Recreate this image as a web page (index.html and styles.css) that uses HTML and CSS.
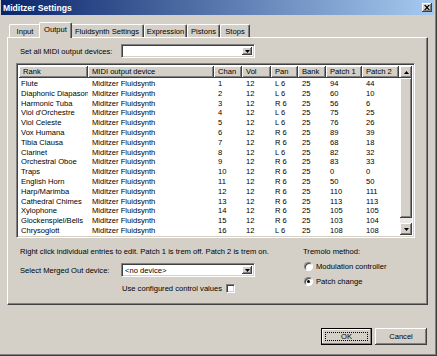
FILE: index.html
```html
<!DOCTYPE html>
<html>
<head>
<meta charset="utf-8">
<link rel="stylesheet" href="styles.css">
</head>
<body>
<div class="window">
  <div class="titlebar">
    <span class="title">Miditzer Settings</span>
    <span class="close"><svg width="6" height="5" viewBox="0 0 6 5"><path d="M0 0h1.5l1.5 1.5 1.5-1.5h1.5l-2.2 2.5 2.2 2.5h-1.5l-1.5-1.5-1.5 1.5h-1.5l2.2-2.5z" fill="#000"/></svg></span>
  </div>
  <div class="client">
    <div class="tabs">
      <div class="tab t-input">Input</div>
      <div class="tab t-output selected">Output</div>
      <div class="tab t-fluid">Fluidsynth Settings</div>
      <div class="tab t-expr">Expression</div>
      <div class="tab t-pist">Pistons</div>
      <div class="tab t-stops">Stops</div>
    </div>
    <div class="panel">
      <div class="setrow">
        <span class="lbl">Set all MIDI output devices:</span>
        <div class="combo"><span class="combo-text"></span><span class="dd"><svg width="5" height="3" viewBox="0 0 5 3"><path d="M0 0h5l-2.5 3z" fill="#000"/></svg></span></div>
      </div>
      <div class="listview">
        <div class="lv-main">
          <div class="lv-head">
            <div class="hc">Rank</div><div class="hc">MIDI output device</div><div class="hc">Chan</div><div class="hc">Vol</div><div class="hc">Pan</div><div class="hc">Bank</div><div class="hc">Patch 1</div><div class="hc">Patch 2</div><div class="hc filler"></div>
          </div>
          <div class="lv-body">
            <div class="row"><span class="c0">Flute</span><span>Miditzer Fluidsynth</span><span>1</span><span>12</span><span>L 6</span><span>25</span><span>94</span><span>44</span></div>
            <div class="row"><span class="c0">Diaphonic Diapason</span><span>Miditzer Fluidsynth</span><span>2</span><span>12</span><span>L 6</span><span>25</span><span>60</span><span>10</span></div>
            <div class="row"><span class="c0">Harmonic Tuba</span><span>Miditzer Fluidsynth</span><span>3</span><span>12</span><span>R 6</span><span>25</span><span>56</span><span>6</span></div>
            <div class="row"><span class="c0">Viol d'Orchestre</span><span>Miditzer Fluidsynth</span><span>4</span><span>12</span><span>L 6</span><span>25</span><span>75</span><span>25</span></div>
            <div class="row"><span class="c0">Viol Celeste</span><span>Miditzer Fluidsynth</span><span>5</span><span>12</span><span>L 6</span><span>25</span><span>76</span><span>26</span></div>
            <div class="row"><span class="c0">Vox Humana</span><span>Miditzer Fluidsynth</span><span>6</span><span>12</span><span>R 6</span><span>25</span><span>89</span><span>39</span></div>
            <div class="row"><span class="c0">Tibia Clausa</span><span>Miditzer Fluidsynth</span><span>7</span><span>12</span><span>R 6</span><span>25</span><span>68</span><span>18</span></div>
            <div class="row"><span class="c0">Clarinet</span><span>Miditzer Fluidsynth</span><span>8</span><span>12</span><span>L 6</span><span>25</span><span>82</span><span>32</span></div>
            <div class="row"><span class="c0">Orchestral Oboe</span><span>Miditzer Fluidsynth</span><span>9</span><span>12</span><span>R 6</span><span>25</span><span>83</span><span>33</span></div>
            <div class="row"><span class="c0">Traps</span><span>Miditzer Fluidsynth</span><span>10</span><span>12</span><span>R 6</span><span>25</span><span>0</span><span>0</span></div>
            <div class="row"><span class="c0">English Horn</span><span>Miditzer Fluidsynth</span><span>11</span><span>12</span><span>R 6</span><span>25</span><span>50</span><span>50</span></div>
            <div class="row"><span class="c0">Harp/Marimba</span><span>Miditzer Fluidsynth</span><span>12</span><span>12</span><span>R 6</span><span>25</span><span>110</span><span>111</span></div>
            <div class="row"><span class="c0">Cathedral Chimes</span><span>Miditzer Fluidsynth</span><span>13</span><span>12</span><span>R 6</span><span>25</span><span>113</span><span>113</span></div>
            <div class="row"><span class="c0">Xylophone</span><span>Miditzer Fluidsynth</span><span>14</span><span>12</span><span>R 6</span><span>25</span><span>105</span><span>105</span></div>
            <div class="row"><span class="c0">Glockenspiel/Bells</span><span>Miditzer Fluidsynth</span><span>15</span><span>12</span><span>R 6</span><span>25</span><span>103</span><span>104</span></div>
            <div class="row"><span class="c0">Chrysoglott</span><span>Miditzer Fluidsynth</span><span>16</span><span>12</span><span>L 6</span><span>25</span><span>108</span><span>108</span></div>
          </div>
        </div>
        <div class="scrollbar">
          <div class="sb-btn"><svg width="5" height="3" viewBox="0 0 5 3"><path d="M0 3h5l-2.5-3z" fill="#000"/></svg></div>
          <div class="sb-thumb"></div>
          <div class="sb-track"></div>
          <div class="sb-btn"><svg width="5" height="3" viewBox="0 0 5 3"><path d="M0 0h5l-2.5 3z" fill="#000"/></svg></div>
        </div>
      </div>
      <div class="lower">
        <div class="lower-left">
          <p class="hint">Right click individual entries to edit. Patch 1 is trem off. Patch 2 is trem on.</p>
          <div class="setrow merged">
            <span class="lbl">Select Merged Out device:</span>
            <div class="combo"><span class="combo-text">&lt;no device&gt;</span><span class="dd"><svg width="5" height="3" viewBox="0 0 5 3"><path d="M0 0h5l-2.5 3z" fill="#000"/></svg></span></div>
          </div>
          <div class="userow">
            <span>Use configured control values</span>
            <span class="check"></span>
          </div>
        </div>
        <div class="tremolo">
          <div class="trem-lbl">Tremolo method:</div>
          <div class="radio-row"><span class="radio"></span><span>Modulation controller</span></div>
          <div class="radio-row"><span class="radio on"><span class="dot"></span></span><span>Patch change</span></div>
        </div>
      </div>
    </div>
    <div class="buttons">
      <div class="btn default"><span class="focus">OK</span></div>
      <div class="btn">Cancel</div>
    </div>
  </div>
</div>
</body>
</html>
```

FILE: styles.css
```css
* { box-sizing: border-box; }
html, body { margin: 0; padding: 0; }
body {
  background: #d4d0c8;
  font-family: "Liberation Sans", Arial, sans-serif;
  font-size: 7.6px;
  color: #000;
}
.window {
  width: 437px;
  height: 356px;
  background: #d4d0c8;
  padding: 0 3px 3px 1px;
  box-shadow: inset -1px -1px #404040, inset -2px -2px #808080;
  display: flex;
  flex-direction: column;
  overflow: hidden;
}
.titlebar {
  height: 15px;
  flex: none;
  background: linear-gradient(to right, #0a246a, #a6caf0);
  display: flex;
  align-items: center;
  justify-content: space-between;
  padding: 0 2px 0 2px;
}
.title {
  color: #fff;
  font-weight: bold;
  font-size: 8.6px;
}
.close {
  width: 10px;
  height: 9px;
  background: #d4d0c8;
  box-shadow: inset -1px -1px #404040, inset 1px 1px #fff, inset -2px -2px #808080;
  display: flex;
  align-items: center;
  justify-content: center;
}
.close svg { display: block; }
.client {
  padding: 7px 0 0 6px;
}
.tabs {
  height: 15px;
  display: flex;
  align-items: flex-end;
  padding-left: 2px;
  position: relative;
  z-index: 2;
}
.tab {
  height: 13px;
  background: #d4d0c8;
  border-top: 1px solid #fff;
  border-left: 1px solid #fff;
  border-right: 1px solid #404040;
  box-shadow: inset -1px 0 #808080;
  border-radius: 2px 2px 0 0;
  display: flex;
  align-items: center;
  justify-content: center;
  white-space: nowrap;
  padding-top: 1px;
}
.t-input { width: 32px; }
.t-output { width: 29px; }
.t-fluid { width: 74px; }
.t-expr { width: 43px; }
.t-pist { width: 33px; }
.t-stops { width: 30px; }
.tab.selected {
  width: 33px;
  height: 16px;
  margin: 0 -2px -1px;
  position: relative;
  z-index: 3;
  padding-top: 0;
  padding-bottom: 2px;
}
.panel {
  width: 421px;
  height: 268px;
  border: 1px solid;
  border-color: #fff #404040 #404040 #fff;
  box-shadow: inset -1px -1px #808080;
  padding: 6px 11px 0 8px;
}
.setrow {
  display: flex;
  align-items: center;
  height: 14px;
  padding-left: 4px;
}
.lbl {
  width: 101px;
  flex: none;
  white-space: nowrap;
}
.combo {
  width: 134px;
  height: 14px;
  background: #fff;
  border: 1px solid;
  border-color: #808080 #fff #fff #808080;
  box-shadow: inset 1px 1px #404040, inset -1px -1px #d4d0c8;
  display: flex;
  align-items: stretch;
  padding: 2px;
}
.combo-text {
  flex: 1;
  padding-left: 1px;
  line-height: 10px;
  white-space: nowrap;
}
.dd {
  width: 10px;
  background: #d4d0c8;
  box-shadow: inset -1px -1px #404040, inset 1px 1px #fff, inset -2px -2px #808080;
  display: flex;
  align-items: center;
  justify-content: center;
}
.dd svg, .sb-btn svg { display: block; }
.listview {
  margin-top: 5px;
  width: 399px;
  height: 175px;
  border: 1px solid;
  border-color: #808080 #fff #fff #808080;
  box-shadow: inset 1px 1px #404040, inset -1px -1px #d4d0c8;
  padding: 2px 2px 2px 2px;
  display: flex;
  background: #fff;
}
.lv-main {
  flex: 1;
  overflow: hidden;
  display: flex;
  flex-direction: column;
}
.lv-head {
  display: grid;
  grid-template-columns: 69px 126px 28px 29px 27px 28px 36px 37px 1fr;
  height: 12px;
  flex: none;
}
.hc {
  background: #d4d0c8;
  box-shadow: inset -1px -1px #404040, inset 1px 1px #fff, inset -2px -2px #808080;
  padding-left: 4px;
  line-height: 12px;
  white-space: nowrap;
  overflow: hidden;
}
.lv-body {
  flex: 1;
  overflow: hidden;
  padding-top: 1px;
}
.row {
  display: grid;
  grid-template-columns: 69px 126px 28px 29px 27px 28px 36px 37px;
  height: 9.8px;
  line-height: 9.8px;
  white-space: nowrap;
}
.row span { padding-left: 4px; overflow: hidden; }
.row .c0 { padding-left: 2px; }
.scrollbar {
  width: 12px;
  flex: none;
  display: flex;
  flex-direction: column;
  background: #ebe9e5;
}
.sb-btn {
  height: 12px;
  flex: none;
  background: #d4d0c8;
  box-shadow: inset -1px -1px #404040, inset 1px 1px #fff, inset -2px -2px #808080;
  display: flex;
  align-items: center;
  justify-content: center;
}
.sb-thumb {
  height: 140px;
  flex: none;
  background: #d4d0c8;
  box-shadow: inset -1px -1px #404040, inset 1px 1px #fff, inset -2px -2px #808080;
}
.sb-track { flex: 1; }
.lower {
  display: flex;
}
.lower-left {
  width: 287px;
  flex: none;
}
.hint {
  margin: 9px 0 0 4px;
  line-height: 10px;
  white-space: nowrap;
}
.merged { margin-top: 6px; }
.userow {
  margin-top: 6px;
  padding-left: 106px;
  height: 10px;
  display: flex;
  align-items: center;
}
.check {
  width: 9px;
  height: 9px;
  margin-left: 4px;
  background: #fff;
  border: 1px solid;
  border-color: #808080 #fff #fff #808080;
  box-shadow: inset 1px 1px #404040, inset -1px -1px #d4d0c8;
}
.tremolo {
  padding-top: 9px;
}
.trem-lbl {
  line-height: 10px;
}
.radio-row {
  display: flex;
  align-items: center;
  height: 10px;
  margin-top: 4px;
  padding-left: 1px;
}
.radio-row + .radio-row { margin-top: 5px; }
.radio {
  width: 9px;
  height: 9px;
  border-radius: 50%;
  border: 1px solid;
  border-color: #808080 #fff #fff #808080;
  background: #fff;
  box-shadow: inset 1px 1px #404040;
  margin-right: 3px;
  display: flex;
  align-items: center;
  justify-content: center;
}
.dot {
  width: 3px;
  height: 3px;
  border-radius: 50%;
  background: #000;
}
.buttons {
  width: 421px;
  display: flex;
  justify-content: flex-end;
  gap: 3px;
  margin-top: 23px;
  padding-right: 1px;
}
.btn {
  width: 52px;
  height: 17px;
  background: #d4d0c8;
  box-shadow: inset -1px -1px #404040, inset 1px 1px #fff, inset -2px -2px #808080;
  display: flex;
  align-items: center;
  justify-content: center;
}
.btn.default {
  width: 51px;
  border: 1px solid #000;
  box-shadow: inset -1px -1px #808080, inset 1px 1px #fff;
  padding: 3px;
}
.focus {
  flex: 1;
  align-self: stretch;
  border: 1px dotted #000;
  display: flex;
  align-items: center;
  justify-content: center;
}
```
